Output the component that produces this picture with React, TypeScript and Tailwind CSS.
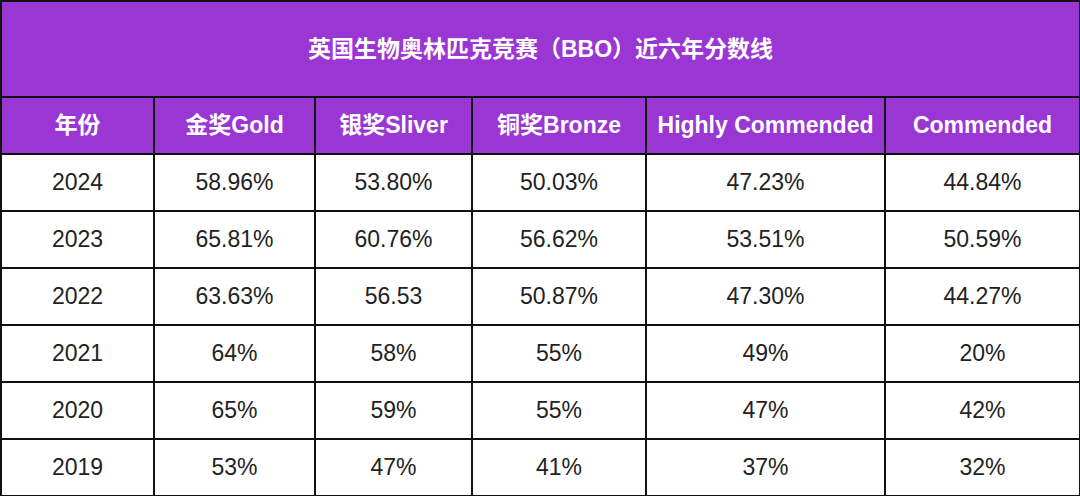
import React from "react";

const headers = ["年份", "金奖Gold", "银奖Sliver", "铜奖Bronze", "Highly Commended", "Commended"];
const rows = [
  ["2024", "58.96%", "53.80%", "50.03%", "47.23%", "44.84%"],
  ["2023", "65.81%", "60.76%", "56.62%", "53.51%", "50.59%"],
  ["2022", "63.63%", "56.53", "50.87%", "47.30%", "44.27%"],
  ["2021", "64%", "58%", "55%", "49%", "20%"],
  ["2020", "65%", "59%", "55%", "47%", "42%"],
  ["2019", "53%", "47%", "41%", "37%", "32%"],
];
const widths = [153, 161, 157, 174, 239, 195];

export default function App() {
  return (
    <div
      className="w-[1080px] h-[496px] bg-white"
      style={{ fontFamily: '"Liberation Sans", Arial, "Noto Sans CJK SC", sans-serif' }}
    >
      <table className="w-[1079px] table-fixed border-collapse border-2 border-[#111]">
        <colgroup>
          {widths.map((w, i) => (
            <col key={i} style={{ width: w }} />
          ))}
        </colgroup>
        <tbody>
          <tr className="h-[96px] bg-[#9a36d4]">
            <td colSpan={6} className="border-2 border-[#111] text-center text-white font-bold text-[23px] p-0">
              英国生物奥林匹克竞赛（BBO）近六年分数线
            </td>
          </tr>
          <tr className="h-[57px] bg-[#9a36d4]">
            {headers.map((h) => (
              <td key={h} className="border-2 border-[#111] text-center text-white font-bold text-[23px] p-0 whitespace-nowrap">
                {h}
              </td>
            ))}
          </tr>
          {rows.map((r) => (
            <tr key={r[0]} className="h-[57px] bg-white">
              {r.map((c, i) => (
                <td key={i} className="border-2 border-[#111] text-center text-[#222] text-[23px] p-0">
                  {c}
                </td>
              ))}
            </tr>
          ))}
        </tbody>
      </table>
    </div>
  );
}
